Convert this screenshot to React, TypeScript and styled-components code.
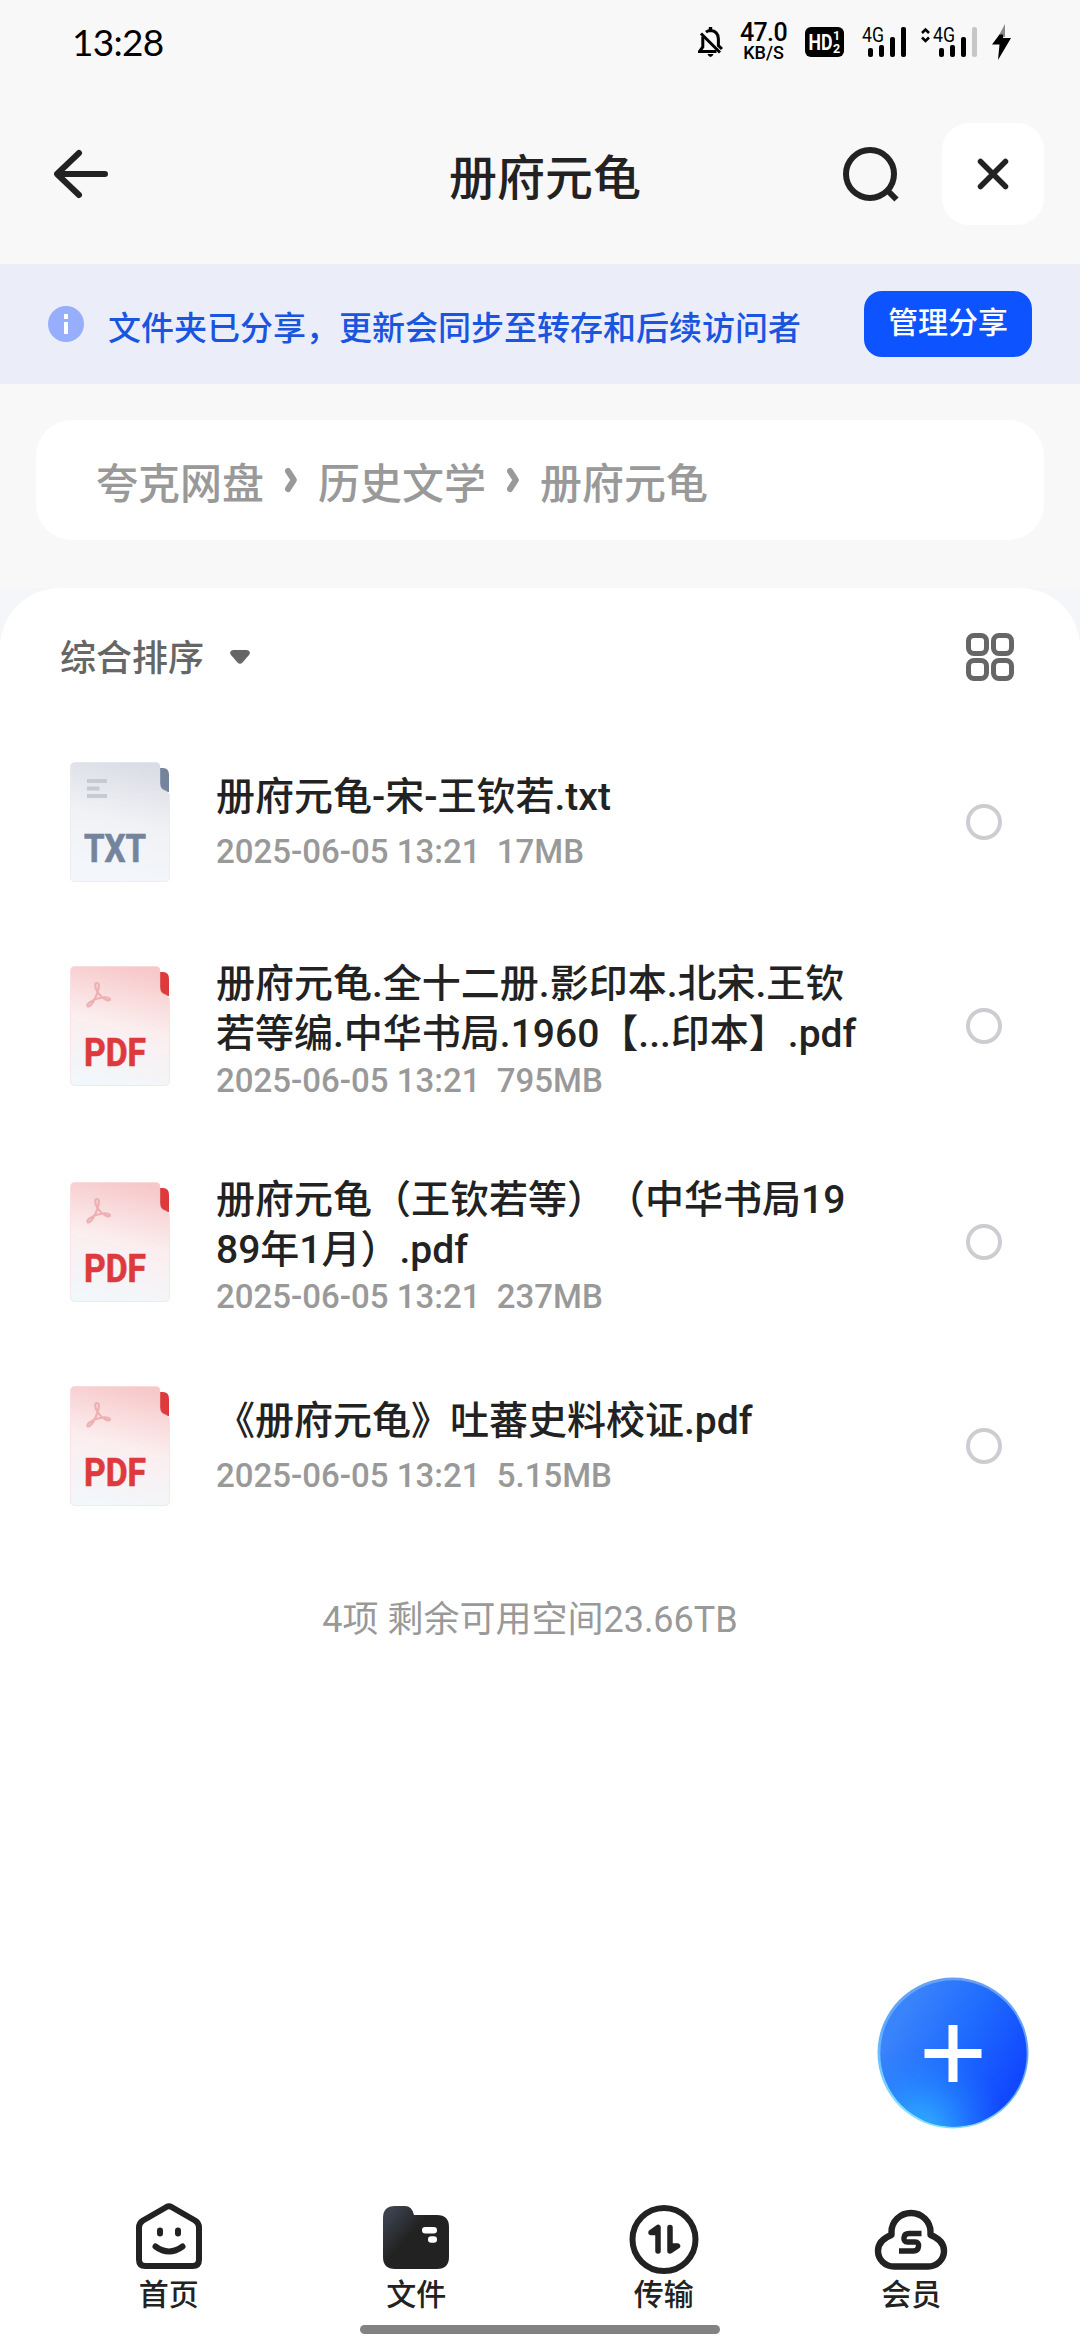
import React from "react";
import styled, { createGlobalStyle } from "styled-components";

const Global = createGlobalStyle`
  * { box-sizing: border-box; }
  html, body { margin: 0; padding: 0; background: #fff; }
  body {
    font-family: Roboto, "Noto Sans CJK SC", sans-serif;
    text-spacing-trim: space-all;
    color: #222;
  }
  svg { display: block; flex: none; }
  button { border: 0; padding: 0; background: none; font: inherit; color: inherit; }
`;

const Page = styled.div`
  position: relative;
  width: 1080px;
  height: 2340px;
  display: flex;
  flex-direction: column;
  overflow: hidden;
  background: #f8f8f8;
`;

/* ---------- status bar ---------- */
const StatusBar = styled.div`
  height: 84px;
  display: flex;
  align-items: center;
  justify-content: space-between;
  padding: 0 69px 0 72px;
  color: #000;
`;
const Clock = styled.span`
  font-family: Lato, sans-serif;
  font-size: 37px;
  line-height: 42px;
  letter-spacing: -0.7px;
`;
const StatusIcons = styled.div`
  display: flex;
  align-items: center;
`;
const Speed = styled.div`
  width: 47px;
  margin: 0 18px 0 17px;
  display: flex;
  flex-direction: column;
  align-items: center;
  font-weight: 500;
`;
const SpeedValue = styled.span`
  font-size: 25px;
  line-height: 21px;
  letter-spacing: -0.6px;
`;
const SpeedUnit = styled.span`
  font-size: 18px;
  line-height: 19px;
`;
const HdSlot = styled.div`
  margin-right: 18px;
`;
const SignalSlot = styled.div`
  margin-right: 15px;
`;

/* ---------- header ---------- */
const Header = styled.header`
  height: 180px;
  display: grid;
  grid-template-columns: 1fr auto 1fr;
  align-items: center;
  padding: 0 36px 0 46px;
`;
const BackButton = styled.button`
  width: 70px;
  height: 60px;
  padding-left: 8px;
`;
const Title = styled.h1`
  margin: 10px 0 0;
  font-size: 48px;
  line-height: 60px;
  font-weight: 500;
  color: #222;
`;
const HeaderActions = styled.div`
  display: flex;
  align-items: center;
  justify-content: flex-end;
  gap: 39px;
`;
const CloseButton = styled.button`
  width: 102px;
  height: 102px;
  border-radius: 27px;
  background: #fff;
  display: flex;
  align-items: center;
  justify-content: center;
`;

/* ---------- share banner ---------- */
const Banner = styled.div`
  height: 120px;
  display: flex;
  align-items: center;
  padding: 0 48px;
  background: #ebeef8;
`;
const BannerText = styled.span`
  flex: 1;
  margin: 9px 0 0 24px;
  font-size: 33px;
  line-height: 40px;
  font-weight: 500;
  color: #1a55e0;
  white-space: nowrap;
`;
const ManageButton = styled.button`
  width: 168px;
  height: 66px;
  padding-bottom: 2px;
  border-radius: 18px;
  background: #0d53ff;
  color: #fff;
  font-size: 30px;
  line-height: 40px;
  font-weight: 500;
`;

/* ---------- breadcrumb ---------- */
const Breadcrumb = styled.nav`
  height: 120px;
  margin: 36px 36px 48px;
  padding: 0 60px;
  border-radius: 36px;
  background: #fff;
  display: flex;
  align-items: center;
  gap: 21px;
`;
const Crumb = styled.span`
  margin-top: 9px;
  font-size: 42px;
  line-height: 52px;
  font-weight: 500;
  color: #999;
`;

/* ---------- file list ---------- */
const PanelBackdrop = styled.div`
  flex: 1;
  display: flex;
  flex-direction: column;
  background: #f4f6f9;
`;
const Panel = styled.main`
  flex: 1;
  display: flex;
  flex-direction: column;
  border-radius: 60px 60px 0 0;
  background: #fff;
`;
const Toolbar = styled.div`
  height: 138px;
  display: flex;
  align-items: center;
  justify-content: space-between;
  padding: 0 66px 0 60px;
`;
const SortButton = styled.button`
  display: flex;
  align-items: center;
  gap: 26px;
  color: #666;
  font-size: 36px;
  line-height: 44px;
  font-weight: 500;
`;
const SortLabel = styled.span`
  margin-top: 3px;
`;
const Row = styled.div<{ $lines: number }>`
  height: ${(p) => (p.$lines > 1 ? 216 : 192)}px;
  display: flex;
  align-items: center;
  padding: 0 78px 0 70px;
`;
const RowBody = styled.div<{ $lines: number }>`
  flex: 1;
  margin-left: 46px;
  padding-top: ${(p) => (p.$lines > 1 ? 9 : 1)}px;
  display: flex;
  flex-direction: column;
  gap: ${(p) => (p.$lines > 1 ? 0 : 8)}px;
`;
const FileName = styled.div`
  font-size: 39px;
  line-height: 50px;
  font-weight: 500;
  color: #222;
  white-space: pre;
`;
const FileMeta = styled.div`
  font-size: 33px;
  line-height: 44px;
  font-weight: 500;
  color: #999;
  white-space: pre;
`;
const Radio = styled.span`
  width: 36px;
  height: 36px;
  border: 4px solid #cdcdd1;
  border-radius: 50%;
`;
const Summary = styled.p`
  margin: 56px 0 0;
  padding-right: 20px;
  text-align: center;
  font-size: 36px;
  line-height: 44px;
  color: #999;
`;

const Fab = styled.button`
  position: absolute;
  right: 51px;
  top: 1977px;
  width: 152px;
  height: 152px;
`;

/* ---------- bottom navigation ---------- */
const BottomNav = styled.nav`
  margin-top: auto;
  height: 125px;
  padding: 0 45px;
  display: flex;
`;
const NavItem = styled.div`
  flex: 1;
  display: flex;
  flex-direction: column;
  align-items: center;
`;
const NavLabel = styled.span`
  margin-top: 3px;
  font-size: 30px;
  line-height: 36px;
  font-weight: 500;
  color: #222;
`;
const HomeIndicator = styled.div`
  width: 360px;
  height: 9px;
  margin: 0 auto 6px;
  border-radius: 5px;
  background: #828282;
`;

const BellOff = () => (
  <svg width="25" height="30" viewBox="0 0 25 30" fill="none" stroke="#000" strokeWidth="3">
    <path d="M12.5 0V4" strokeWidth="3.4" />
    <path d="M8 5.2Q10 3.6 12.5 3.6Q20 4 20.4 12V18.5L24 22" />
    <path d="M4.8 9.5V20L1.5 24.5H18.5" />
    <path d="M3 6.5L22 25.5" />
    <path d="M9.5 27H15.5Q14.5 30 12.5 30Q10.5 30 9.5 27Z" fill="#000" stroke="none" />
  </svg>
);

const HdBadge = () => (
  <svg width="39" height="30" viewBox="0 0 39 30" fill="#fff" fontFamily="Roboto" fontWeight="700">
    <rect width="39" height="30" rx="6" fill="#000" />
    <text x="3.5" y="23" fontSize="21.500" textLength="24" lengthAdjust="spacingAndGlyphs">
      HD
    </text>
    <text x="28" y="13" fontSize="12.500">1</text>
    <text x="28" y="25.500" fontSize="12.500">2</text>
  </svg>
);

const Signal = ({ arrows, level }: { arrows?: boolean; level: number }) => {
  const off = arrows ? 12 : 0;
  const bars = [9, 12, 20, 30];
  return (
    <svg width={44 + off} height="46" viewBox={`0 -8 ${44 + off} 46`}>
      {arrows && (
        <path d="M1 6L4.5 2.5L8 6M1 10.5L4.5 14L8 10.5" fill="none" stroke="#000" strokeWidth="2.6" />
      )}
      <text
        x={off}
        y="15"
        fontFamily="Roboto"
        fontSize="20"
        textLength="22"
        lengthAdjust="spacingAndGlyphs"
      >
        4G
      </text>
      {bars.map((h, i) => (
        <rect
          key={h}
          x={off + 6 + i * 11}
          y={30 - h}
          width="5"
          height={h}
          rx="2"
          fill={i < level ? "#000" : "#c7c7c7"}
        />
      ))}
    </svg>
  );
};

const Bolt = () => (
  <svg width="19" height="36" viewBox="0 0 19 36">
    <path d="M13 0L6 13H13Z" fill="#8a8a8a" />
    <path d="M7.5 10.5L0 20.5H7.5L6 36L19 14H11V10.5Z" fill="#000" />
  </svg>
);

const Chevron = () => (
  <svg width="12" height="26" viewBox="0 0 12 26">
    <path
      d="M3 4L8.800 13L3 22"
      fill="none"
      stroke="#999"
      strokeWidth="6"
      strokeLinecap="round"
      strokeLinejoin="round"
    />
  </svg>
);

type Kind = "txt" | "pdf";
const palette = {
  txt: { top: "#dadde5", mid: "#f1f2f5", low: "#f3f7fb", ink: "#74849c", faint: "#c6cad1" },
  pdf: { top: "#f7c8c9", mid: "#fbeeef", low: "#f2f7fb", ink: "#dd3a3e", faint: "#eeb0b2" },
};

const FileIcon = ({ kind }: { kind: Kind }) => {
  const c = palette[kind];
  const id = `sheet-${kind}`;
  return (
    <svg width="100" height="120" viewBox="0 0 100 120">
      <defs>
        <linearGradient id={id} x1="0.620" y1="0" x2="0.420" y2="1">
          <stop offset="0" stopColor={c.top} />
          <stop offset="0.500" stopColor={c.mid} />
          <stop offset="1" stopColor={c.low} />
        </linearGradient>
      </defs>
      <path d="M88 6H93Q99 6 99 13V30H92L88 26Z" fill={c.ink} />
      <path
        d="M5 .5H86Q90 .5 90 4.500V21Q90 27 95 28.500Q99.500 30 99.500 34V115Q99.500 119.500 95 119.500H5Q.5 119.500 .5 115V5Q.5 .5 5 .5Z"
        fill={`url(#${id})`}
        stroke={c.top}
        strokeOpacity="0.400"
      />
      {kind === "txt" ? (
        <path d="M17 19H37M17 26.500H29.500M17 34H37" stroke={c.faint} strokeWidth="3.800" />
      ) : (
        <path
          d="M27.500 26C24 20 25 17 27 17C29.500 17 29.500 21 27.500 26C26 32 21 41 18 40.500C15 39 22 33.500 28 32.500C34 31 40 31 40 33.500C39.500 36 32.500 33.500 27.500 26Z"
          fill="none"
          stroke={c.faint}
          strokeWidth="2.200"
          strokeLinejoin="round"
        />
      )}
      <text
        x="14"
        y="100"
        fontFamily="Roboto"
        fontWeight="700"
        fontSize="39.500"
        fill={c.ink}
        stroke={c.ink}
        strokeWidth="0.700"
        textLength="62"
        lengthAdjust="spacingAndGlyphs"
      >
        {kind.toUpperCase()}
      </text>
    </svg>
  );
};

const HomeIcon = () => (
  <svg width="70" height="74" viewBox="0 0 70 74" fill="none" stroke="#222" strokeWidth="6" strokeLinecap="round" strokeLinejoin="round">
    <path d="M32.500 7Q35 5.500 37.500 7L61 20.500Q65 23 65 27.500V59.500Q65 66 58.500 66H11.500Q5 66 5 59.500V27.500Q5 23 9 20.500Z" />
    <path d="M26 30.500V33.500M44 30.500V33.500" />
    <path d="M21.500 46.500Q35 56.500 48.500 46.500" />
  </svg>
);

const FolderIcon = () => (
  <svg width="70" height="74" viewBox="0 0 70 74">
    <defs>
      <linearGradient id="folder" x1="0" y1="0.100" x2="0.750" y2="0.750">
        <stop offset="0.080" stopColor="#3b424d" />
        <stop offset="0.550" stopColor="#222" />
      </linearGradient>
    </defs>
    <path
      d="M14 6H24Q31 6 33 15H56Q68 15 68 27V57Q68 69 56 69H14Q2 69 2 57V18Q2 6 14 6Z"
      fill="url(#folder)"
    />
    <rect x="41" y="27" width="15" height="6.500" rx="3.200" fill="#fff" />
    <rect x="47" y="36.200" width="9" height="6.500" rx="3.200" fill="#fff" />
  </svg>
);

const TransferIcon = () => (
  <svg width="70" height="76" viewBox="0 0 70 76" fill="#222" stroke="#222">
    <circle cx="35" cy="39.500" r="31.500" fill="none" strokeWidth="6" />
    <path d="M29 27.500V51M22 32.500L29 27.500V32.500Z" strokeWidth="5.500" strokeLinecap="round" strokeLinejoin="round" />
    <path d="M41 27.500V51L48.500 46H41Z" strokeWidth="5.500" strokeLinecap="round" strokeLinejoin="round" />
  </svg>
);

const CloudIcon = () => (
  <svg width="74" height="74" viewBox="0 0 74 74" fill="none" stroke="#222">
    <path
      d="M17.500 35V32A19.500 19 0 0 1 56.500 32V35C64.500 38 70 43.500 70 51A16 15.500 0 0 1 54 66.500H20A16 15.500 0 0 1 4 51C4 43.500 9.500 38 17.500 35Z"
      strokeWidth="6.400"
      strokeLinejoin="round"
    />
    <path
      d="M47.500 33.500H35Q30.500 33.500 30 37.500Q29.500 42 33.500 42H41Q45 42 44.500 46.500Q44 51 39.500 51H25"
      strokeWidth="5.500"
      strokeLinejoin="round"
    />
  </svg>
);

const files: { kind: Kind; name: string[]; size: string }[] = [
  { kind: "txt", name: ["册府元龟-宋-王钦若.txt"], size: "17MB" },
  {
    kind: "pdf",
    name: ["册府元龟.全十二册.影印本.北宋.王钦", "若等编.中华书局.1960【...印本】.pdf"],
    size: "795MB",
  },
  { kind: "pdf", name: ["册府元龟（王钦若等）（中华书局19", "89年1月）.pdf"], size: "237MB" },
  { kind: "pdf", name: ["《册府元龟》吐蕃史料校证.pdf"], size: "5.15MB" },
];

const crumbs = ["夸克网盘", "历史文学", "册府元龟"];

const tabs = [
  { label: "首页", Icon: HomeIcon },
  { label: "文件", Icon: FolderIcon },
  { label: "传输", Icon: TransferIcon },
  { label: "会员", Icon: CloudIcon },
];

const NavIcon = styled.div`
  height: 74px;
`;

export default function App() {
  return (
    <Page>
      <Global />
      <StatusBar>
        <Clock>13:28</Clock>
        <StatusIcons>
          <BellOff />
          <Speed>
            <SpeedValue>47.0</SpeedValue>
            <SpeedUnit>KB/S</SpeedUnit>
          </Speed>
          <HdSlot>
            <HdBadge />
          </HdSlot>
          <SignalSlot>
            <Signal level={4} />
          </SignalSlot>
          <SignalSlot>
            <Signal arrows level={3} />
          </SignalSlot>
          <Bolt />
        </StatusIcons>
      </StatusBar>

      <Header>
        <BackButton aria-label="返回">
          <svg width="54" height="60" viewBox="0 0 54 60" fill="none" stroke="#222" strokeWidth="6" strokeLinecap="round" strokeLinejoin="round">
            <path d="M25 9L3 30L25 51M4 30H51" />
          </svg>
        </BackButton>
        <Title>册府元龟</Title>
        <HeaderActions>
          <svg width="60" height="60" viewBox="0 0 60 60" fill="none" stroke="#222" strokeWidth="6">
            <circle cx="27" cy="30" r="24" />
            <path d="M44 46L53.500 55.500" />
          </svg>
          <CloseButton aria-label="关闭">
            <svg width="36" height="36" viewBox="0 0 36 36" stroke="#222" strokeWidth="5.500" strokeLinecap="round">
              <path d="M5.500 5.500L30.500 30.500M30.500 5.500L5.500 30.500" />
            </svg>
          </CloseButton>
        </HeaderActions>
      </Header>

      <Banner>
        <svg width="36" height="36" viewBox="0 0 36 36">
          <circle cx="18" cy="18" r="18" fill="#96aefb" />
          <path d="M16 8H20V13H16ZM16 16H20V28H16Z" fill="#fff" />
        </svg>
        <BannerText>文件夹已分享，更新会同步至转存和后续访问者</BannerText>
        <ManageButton>管理分享</ManageButton>
      </Banner>

      <Breadcrumb>
        {crumbs.map((c, i) => (
          <React.Fragment key={c}>
            {i > 0 && <Chevron />}
            <Crumb>{c}</Crumb>
          </React.Fragment>
        ))}
      </Breadcrumb>

      <PanelBackdrop>
        <Panel>
          <Toolbar>
            <SortButton>
              <SortLabel>综合排序</SortLabel>
              <svg width="20" height="14" viewBox="0 0 20 14">
                <path d="M3 0H17Q21.500 1 19 5L12.500 12.500Q10 15 7.500 12.500L1 5Q-1.500 1 3 0Z" fill="#666" />
              </svg>
            </SortButton>
            <svg width="48" height="48" viewBox="0 0 48 48" fill="none" stroke="#666" strokeWidth="5">
              <rect x="2.500" y="2.500" width="18" height="18" rx="5.500" />
              <rect x="27.500" y="2.500" width="18" height="18" rx="5.500" />
              <rect x="2.500" y="27.500" width="18" height="18" rx="5.500" />
              <rect x="27.500" y="27.500" width="18" height="18" rx="5.500" />
            </svg>
          </Toolbar>

          {files.map((f) => (
            <Row key={f.name[0]} $lines={f.name.length}>
              <FileIcon kind={f.kind} />
              <RowBody $lines={f.name.length}>
                <FileName>{f.name.join("\n")}</FileName>
                <FileMeta>{`2025-06-05 13:21  ${f.size}`}</FileMeta>
              </RowBody>
              <Radio />
            </Row>
          ))}

          <Summary>4项 剩余可用空间23.66TB</Summary>

          <BottomNav>
            {tabs.map(({ label, Icon }) => (
              <NavItem key={label}>
                <NavIcon>
                  <Icon />
                </NavIcon>
                <NavLabel>{label}</NavLabel>
              </NavItem>
            ))}
          </BottomNav>
          <HomeIndicator />
        </Panel>
      </PanelBackdrop>

      <Fab aria-label="添加">
        <svg width="152" height="152" viewBox="0 0 152 152">
          <defs>
            <linearGradient id="fab" x1="0.150" y1="0.200" x2="0.950" y2="0.650">
              <stop offset="0" stopColor="#3a84fb" />
              <stop offset="0.500" stopColor="#1f6bfe" />
              <stop offset="1" stopColor="#1148ff" />
            </linearGradient>
            <radialGradient id="glow" cx="0.260" cy="1.050" r="0.600">
              <stop offset="0" stopColor="#35b4ff" />
              <stop offset="0.300" stopColor="#2da4ff" stopOpacity="0.800" />
              <stop offset="1" stopColor="#1f7bff" stopOpacity="0" />
            </radialGradient>
            <linearGradient id="rim" x1="0.700" y1="0" x2="0.300" y2="1">
              <stop offset="0" stopColor="#6a9ff0" />
              <stop offset="0.500" stopColor="#5fa8ff" />
              <stop offset="1" stopColor="#86e6ff" />
            </linearGradient>
          </defs>
          <circle cx="76" cy="76" r="75.500" fill="url(#rim)" />
          <circle cx="76.500" cy="76.500" r="73.200" fill="url(#fab)" />
          <circle cx="76.500" cy="76.500" r="73.200" fill="url(#glow)" />
          <path d="M76 48V105M47.500 76.500H104.500" stroke="#fff" strokeWidth="9" />
        </svg>
      </Fab>
    </Page>
  );
}
